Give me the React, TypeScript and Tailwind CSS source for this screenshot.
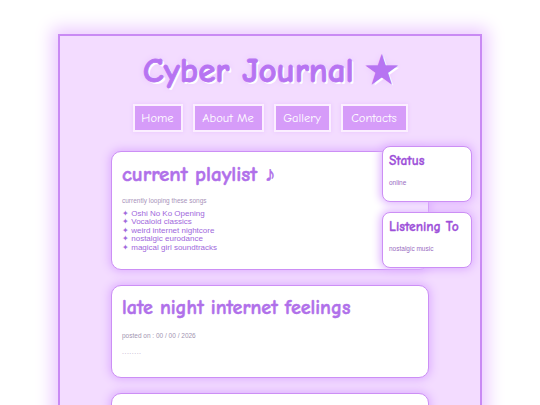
import React from "react";

export default function App() {
  const songs = [
    "Oshi No Ko Opening",
    "Vocaloid classics",
    "weird internet nightcore",
    "nostalgic eurodance",
    "magical girl soundtracks",
  ];
  const navs = [
    { t: "Home", w: "w-[50px]" },
    { t: "About Me", w: "w-[71px]" },
    { t: "Gallery", w: "w-[57px]" },
    { t: "Contacts", w: "w-[67px]" },
  ];
  return (
    <div className="w-[540px] h-[405px] overflow-hidden bg-white">
      <div className="relative mx-auto mt-[34px] w-[424px] h-[420px] border-2 border-[#c98af4] bg-[#f3dcff] shadow-[0_0_16px_6px_#eccbff] pt-[16px]">
        <h1 className="text-center text-[35px] leading-[38px] font-bold font-['Comic_Sans_MS','Comic_Neue',cursive] text-[#b774f2] [-webkit-text-stroke:0.8px_#b774f2] [text-shadow:2px_2px_0_#ffffff,0_0_6px_#e6c2ff]">
          Cyber Journal ★
        </h1>
        <nav className="mt-[14px] flex justify-center gap-[10px] font-['Comic_Sans_MS','Comic_Neue',cursive]">
          {navs.map((n) => (
            <div
              key={n.t}
              className={`${n.w} h-[28px] flex items-center justify-center bg-[#d69cf9] border-2 border-[#fbefff] text-white text-[12.5px] shadow-[0_0_4px_#e8c4ff]`}
            >
              {n.t}
            </div>
          ))}
        </nav>
        <div className="mt-[19px] flex flex-col gap-[15px] items-center">
          <div className="w-[318px] bg-white border-[1.5px] border-[#cc8ff5] rounded-[10px] shadow-[0_0_8px_2px_#dfb2ff] px-[10px] pt-[10px] pb-[17px]">
            <h2 className="text-[21px] leading-[24px] font-bold font-['Comic_Sans_MS','Comic_Neue',cursive] text-[#b070ea] [-webkit-text-stroke:0.5px_#b070ea]">
              current playlist ♪
            </h2>
            <p className="mt-[11px] text-[6.5px] leading-[8px] text-[#a893ba] font-['Liberation_Sans',Arial,sans-serif]">
              currently looping these songs
            </p>
            <ul className="mt-[5px] text-[8px] leading-[8.4px] text-[#a068dc] font-['Liberation_Sans',Arial,sans-serif]">
              {songs.map((s) => (
                <li key={s}>✦ {s}</li>
              ))}
            </ul>
          </div>
          <div className="w-[318px] bg-white border-[1.5px] border-[#cc8ff5] rounded-[10px] shadow-[0_0_8px_2px_#dfb2ff] px-[10px] pt-[10px] pb-[21px]">
            <h2 className="text-[20px] leading-[24px] font-bold font-['Comic_Sans_MS','Comic_Neue',cursive] text-[#b070ea] [-webkit-text-stroke:0.5px_#b070ea]">
              late night internet feelings
            </h2>
            <p className="mt-[12px] text-[6.5px] leading-[8px] text-[#a295b2] font-['Liberation_Sans',Arial,sans-serif]">
              posted on : 00 / 00 / 2026
            </p>
            <p className="mt-[8px] text-[7px] leading-[8px] tracking-[0.5px] text-[#b9a6c9] font-['Liberation_Sans',Arial,sans-serif]">
              ........
            </p>
          </div>
          <div className="w-[318px] h-[60px] bg-white border-[1.5px] border-[#cc8ff5] rounded-[10px] shadow-[0_0_8px_2px_#dfb2ff]" />
        </div>
        <aside className="absolute left-[322px] top-[110px] w-[90px] flex flex-col gap-[10px]">
          {[
            { t: "Status", s: "online" },
            { t: "Listening To", s: "nostalgic music" },
          ].map((b) => (
            <div
              key={b.t}
              className="h-[56px] bg-white border-[1.5px] border-[#cc8ff5] rounded-[8px] shadow-[0_0_8px_2px_#dfb2ff] px-[6px] pt-[5px]"
            >
              <h3 className="text-[13.5px] leading-[18px] font-bold font-['Comic_Sans_MS','Comic_Neue',cursive] text-[#9d50d9] [-webkit-text-stroke:0.3px_#9d50d9]">
                {b.t}
              </h3>
              <p className="mt-[9px] text-[6.5px] leading-[8px] text-[#9a6cc2] font-['Liberation_Sans',Arial,sans-serif]">
                {b.s}
              </p>
            </div>
          ))}
        </aside>
      </div>
    </div>
  );
}
